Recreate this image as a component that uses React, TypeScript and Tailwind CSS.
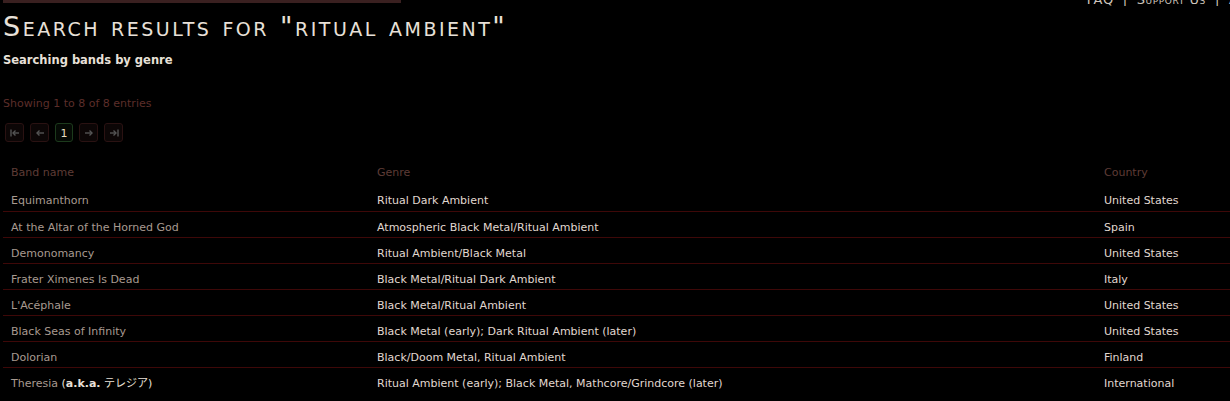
import React from "react";

const rows: { band: React.ReactNode; genre: string; country: string }[] = [
  { band: "Equimanthorn", genre: "Ritual Dark Ambient", country: "United States" },
  { band: "At the Altar of the Horned God", genre: "Atmospheric Black Metal/Ritual Ambient", country: "Spain" },
  { band: "Demonomancy", genre: "Ritual Ambient/Black Metal", country: "United States" },
  { band: "Frater Ximenes Is Dead", genre: "Black Metal/Ritual Dark Ambient", country: "Italy" },
  { band: "L'Acéphale", genre: "Black Metal/Ritual Ambient", country: "United States" },
  { band: "Black Seas of Infinity", genre: "Black Metal (early); Dark Ritual Ambient (later)", country: "United States" },
  { band: "Dolorian", genre: "Black/Doom Metal, Ritual Ambient", country: "Finland" },
  {
    band: (
      <>
        <span className="text-[#a89a90]">Theresia</span>{" "}
        <span className="text-[#e8e0d8]">
          (<b>a.k.a.</b> テレジア)
        </span>
      </>
    ),
    genre: "Ritual Ambient (early); Black Metal, Mathcore/Grindcore (later)",
    country: "International",
  },
];

const PagerBtn = ({ children, active }: { children: React.ReactNode; active?: boolean }) => (
  <div
    className={
      "flex h-[19px] items-center justify-center rounded-[3px] border " +
      (active
        ? "w-[18px] border-[#1c3a1c] bg-[#050a05] text-[#e8dcc0]"
        : "w-[19px] border-[#2a1212] bg-[#0c0606] text-[#5a5a5a]")
    }
  >
    {children}
  </div>
);

const Arrow = ({ kind }: { kind: "first" | "prev" | "next" | "last" }) => (
  <svg width="10" height="8" viewBox="0 0 10 8" fill="none" stroke="#555" strokeWidth="1.4">
    {kind === "first" && (
      <>
        <path d="M1 0.5v7" />
        <path d="M3 4h6" />
        <path d="M5.5 1.5L3 4l2.5 2.5" />
      </>
    )}
    {kind === "prev" && (
      <>
        <path d="M2 4h7" />
        <path d="M4.5 1.5L2 4l2.5 2.5" />
      </>
    )}
    {kind === "next" && (
      <>
        <path d="M1 4h7" />
        <path d="M5.5 1.5L8 4l-2.5 2.5" />
      </>
    )}
    {kind === "last" && (
      <>
        <path d="M9 0.5v7" />
        <path d="M1 4h6" />
        <path d="M4.5 1.5L7 4l-2.5 2.5" />
      </>
    )}
  </svg>
);

export default function App() {
  return (
    <div
      className="h-[401px] w-[1230px] overflow-hidden bg-black"
      style={{ fontFamily: '"DejaVu Sans", Verdana, "Noto Sans CJK JP", sans-serif' }}
    >
      <div className="flex items-start justify-between overflow-hidden">
        <div className="ml-[3px] h-[3px] w-[398px] bg-[#3a2020]" />
        <div
          className="-mt-[7px] mr-[-36px] flex gap-[9px] text-[13px] leading-[13px] tracking-[0.6px] text-[#cfc6bc]"
          style={{ fontVariant: "small-caps" }}
        >
          <span>FAQ</span>
          <span>|</span>
          <span>Support Us</span>
          <span>|</span>
          <span>About</span>
        </div>
      </div>
      <div className="px-[3px]">
        <h1
          className="mt-[5px] text-[27px] leading-[32px] font-normal tracking-[2.5px] text-[#e8e0d8]"
          style={{ fontVariant: "small-caps" }}
        >
          Search results for "ritual ambient"
        </h1>
        <div className="mt-[10px] text-[11.5px] leading-[14px] font-bold text-[#e8e0d8]">
          Searching bands by genre
        </div>
        <div className="mt-[30px] text-[11px] leading-[14px] text-[#5c2e2a]">
          Showing 1 to 8 of 8 entries
        </div>
        <div className="mt-[12px] ml-[2px] flex gap-[6px] text-[11px]">
          <PagerBtn><Arrow kind="first" /></PagerBtn>
          <PagerBtn><Arrow kind="prev" /></PagerBtn>
          <PagerBtn active><span className="mt-[3px] font-normal">1</span></PagerBtn>
          <PagerBtn><Arrow kind="next" /></PagerBtn>
          <PagerBtn><Arrow kind="last" /></PagerBtn>
        </div>
        <table className="mt-[18px] w-[1227px] table-fixed border-collapse text-[11px] leading-[14px]">
          <colgroup>
            <col className="w-[366px]" />
            <col className="w-[727px]" />
            <col />
          </colgroup>
          <thead>
            <tr className="h-[25px] text-left text-[#5e3c36]">
              <th className="pl-[8px] font-normal">Band name</th>
              <th className="pl-[8px] font-normal">Genre</th>
              <th className="pl-[8px] font-normal">Country</th>
            </tr>
          </thead>
          <tbody>
            {rows.map((r, i) => (
              <tr
                key={i}
                className={"h-[26px] " + (i < rows.length - 1 ? "border-b border-[#3e0808]" : "")}
              >
                <td className="pl-[8px] pt-[9px] pb-[2px] align-top text-[#a89a90]">{r.band}</td>
                <td className="pl-[8px] pt-[9px] pb-[2px] align-top text-[#e0d8d0]">{r.genre}</td>
                <td className="pl-[8px] pt-[9px] pb-[2px] align-top text-[#e0d8d0]">{r.country}</td>
              </tr>
            ))}
          </tbody>
        </table>
      </div>
    </div>
  );
}
